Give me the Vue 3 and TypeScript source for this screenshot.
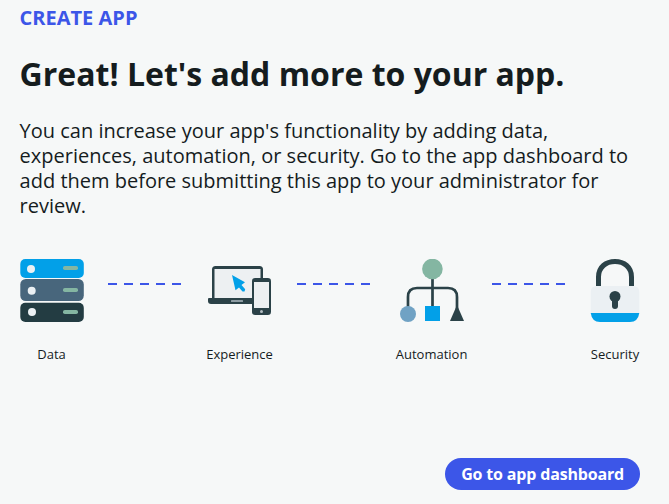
<script setup lang="ts">
type StepId = 'data' | 'experience' | 'automation' | 'security'

interface Step {
  id: StepId
  label: string
}

const steps: Step[] = [
  { id: 'data', label: 'Data' },
  { id: 'experience', label: 'Experience' },
  { id: 'automation', label: 'Automation' },
  { id: 'security', label: 'Security' },
]
</script>

<template>
  <main class="page">
    <p class="eyebrow">CREATE APP</p>
    <h1 class="title">Great! Let's add more to your app.</h1>
    <p class="intro">
      You can increase your app's functionality by adding data, experiences, automation, or
      security. Go to the app dashboard to add them before submitting this app to your
      administrator for review.
    </p>

    <div class="steps">
      <template v-for="(step, index) in steps" :key="step.id">
        <svg v-if="index > 0" class="connector" width="74" height="2" viewBox="0 0 74 2" aria-hidden="true">
          <path d="M0 1H74" stroke="#3c56e8" stroke-width="2" stroke-dasharray="9 7" />
        </svg>
        <div class="step" :class="step.id">
          <svg v-if="step.id === 'data'" class="icon" width="64" height="64" viewBox="0 0 64 64">
            <rect x=".3" y="0" width="63.5" height="19" rx="5" fill="#02a0e8" />
            <rect x=".3" y="20" width="63.5" height="22" rx="5.5" fill="#48667c" />
            <rect x=".3" y="43.7" width="63.5" height="19.3" rx="5" fill="#233c42" />
            <g fill="#ebf0f3">
              <circle cx="11" cy="10" r="4" />
              <circle cx="11.7" cy="31.7" r="4" />
              <circle cx="12" cy="53" r="4" />
            </g>
            <g fill="#84b6a2">
              <rect x="43" y="7" width="15" height="4" rx="1.8" />
              <rect x="43" y="29" width="15" height="4" rx="1.8" />
              <rect x="43" y="51" width="15" height="4" rx="1.8" />
            </g>
          </svg>

          <svg v-else-if="step.id === 'experience'" class="icon" width="64" height="64" viewBox="0 0 64 64">
            <path d="M4 41V10.5Q4 7 7.500 7H51.500Q55 7 55 10.500V41Z" fill="#2b4248" />
            <rect x="6.500" y="10" width="46" height="29" fill="#edf0f2" />
            <path d="M1 39H45V45H3Q0 45 0 42V40Q0 39 1 39Z" fill="#2b4248" />
            <rect x="23" y="41" width="12" height="2" rx=".5" fill="#8d9ca3" />
            <path d="M24 16L37 23.300L33.500 26L37.200 30.300L36.500 32.500H34.500L31 28.500L27.500 31.200Z" fill="#02a0e8" />
            <rect x="44" y="19" width="19" height="37" rx="3.200" fill="#2b4248" />
            <rect x="46" y="23" width="15" height="26" fill="#edf0f2" />
            <circle cx="53.500" cy="52.500" r="1.500" fill="#b4bec3" />
          </svg>

          <svg v-else-if="step.id === 'automation'" class="icon" width="66" height="64" viewBox="-1 0 66 64">
            <path d="M32.500 16V48M8 49V38Q8 29 17 29H48Q57 29 57 38V50" fill="none" stroke="#2b4248" stroke-width="2.700" />
            <circle cx="32.400" cy="10" r="10.300" fill="#84b6a2" />
            <circle cx="8" cy="55" r="8" fill="#70a2c4" />
            <rect x="25" y="47" width="15" height="15" fill="#02a0e8" />
            <path d="M57 46L64 62H50Z" fill="#2b4248" />
          </svg>

          <svg v-else class="icon" width="50" height="64" viewBox="0 0 50 64">
            <path d="M8.500 27V18C8.500 8 16 2.500 25 2.500S41.500 8 41.500 18V27" fill="none" stroke="#2b4248" stroke-width="5" />
            <path d="M.7 33Q.7 27 7 27H43Q49.300 27 49.300 33V55H.7Z" fill="#ebf0f3" />
            <path d="M.7 54H49.300Q48 63 40 63H10Q2 63 .7 54Z" fill="#02a0e8" />
            <circle cx="25" cy="37.500" r="5.500" fill="#2b4248" />
            <path d="M25 39V47" stroke="#2b4248" stroke-width="6" stroke-linecap="round" />
          </svg>
          <span class="label">{{ step.label }}</span>
        </div>
      </template>
    </div>

    <footer class="actions">
      <button class="primary" type="button">Go to app dashboard</button>
    </footer>
  </main>
</template>

<style>
body {
  background: #f6f8f8;
}
</style>

<style scoped>
.page {
  box-sizing: border-box;
  display: flex;
  flex-direction: column;
  height: 504px;
  padding: 5px 29px 14px 19.6px;
  background: #f6f8f8;
  color: #151c1e;
  font-family: 'Open Sans', sans-serif;
}

.eyebrow {
  margin: 0;
  color: #3c56e8;
  font-size: 20px;
  font-weight: 700;
  line-height: 25px;
}

.title {
  margin: 24px 0 0;
  font-size: 32px;
  font-weight: 700;
  line-height: 40px;
}

.intro {
  margin: 24px 0 0;
  font-size: 20px;
  line-height: 25px;
}

.steps {
  display: flex;
  justify-content: space-between;
  margin-top: 41px;
}

.step {
  display: flex;
  flex-direction: column;
  align-items: center;
  gap: 22px;
}

.automation {
  padding-left: 0.4px;
}

.icon {
  display: block;
}

.connector {
  margin-top: 24px;
}

.label {
  font-size: 13px;
  line-height: 18px;
}

.actions {
  display: flex;
  justify-content: flex-end;
  margin-top: auto;
}

.primary {
  height: 32px;
  padding: 0 16px;
  border: 0;
  border-radius: 16px;
  background: #3c56e8;
  color: #fff;
  font: 700 16px/32px 'Open Sans', sans-serif;
  letter-spacing: -0.17px;
}
</style>
